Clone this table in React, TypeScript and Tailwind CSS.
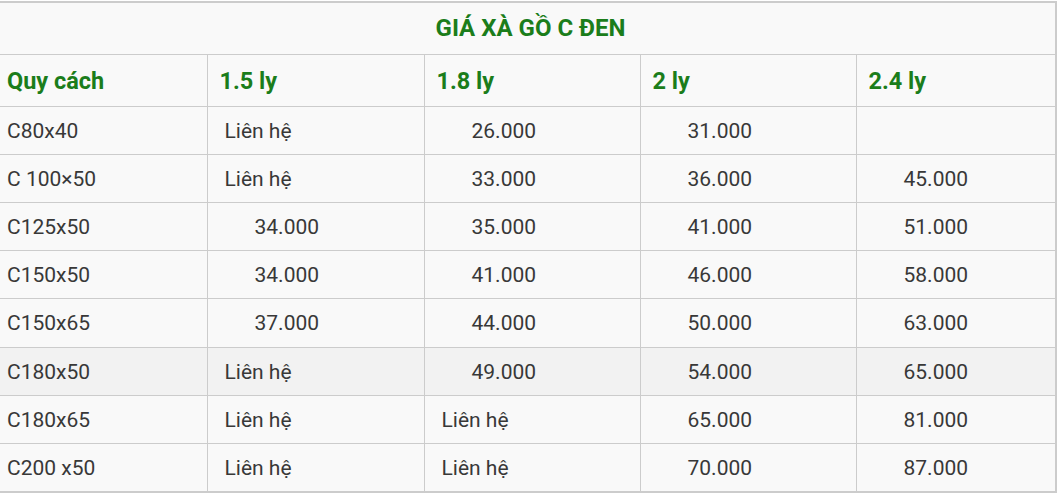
import React from "react";

type Cell = { t: string; pad: string } | null;

const L = (t: string): Cell => ({ t, pad: "pl-[17px]" });
const N = (t: string): Cell => ({ t, pad: "pl-[47px]" });

const rows: { name: string; cells: Cell[]; hl?: boolean; h: string }[] = [
  { name: "C80x40", cells: [L("Liên hệ"), N("26.000"), N("31.000"), null], h: "h-[48px]" },
  { name: "C 100×50", cells: [L("Liên hệ"), N("33.000"), N("36.000"), N("45.000")], h: "h-[48px]" },
  { name: "C125x50", cells: [N("34.000"), N("35.000"), N("41.000"), N("51.000")], h: "h-[48px]" },
  { name: "C150x50", cells: [N("34.000"), N("41.000"), N("46.000"), N("58.000")], h: "h-[48px]" },
  { name: "C150x65", cells: [N("37.000"), N("44.000"), N("50.000"), N("63.000")], h: "h-[49px]" },
  { name: "C180x50", cells: [L("Liên hệ"), N("49.000"), N("54.000"), N("65.000")], hl: true, h: "h-[48px]" },
  { name: "C180x65", cells: [L("Liên hệ"), L("Liên hệ"), N("65.000"), N("81.000")], h: "h-[48px]" },
  { name: "C200 x50", cells: [L("Liên hệ"), L("Liên hệ"), N("70.000"), N("87.000")], h: "h-[48px]" },
];

const headers = ["1.5 ly", "1.8 ly", "2 ly", "2.4 ly"];

export default function App() {
  return (
    <div className="w-[1058px] h-[493px] bg-white pt-px" style={{ fontFamily: "Roboto, 'Liberation Sans', sans-serif" }}>
      <div className="w-[1057px] bg-[#f9f9f9] border-t-2 border-r-2 border-b-2 border-[#cccccc]">
        <table className="w-[1055px] table-fixed border-collapse">
          <colgroup>
            <col className="w-[207px]" />
            <col className="w-[217px]" />
            <col className="w-[216px]" />
            <col className="w-[216px]" />
            <col className="w-[199px]" />
          </colgroup>
          <tbody>
            <tr className="h-[51px]">
              <td colSpan={5} className="text-center align-middle text-[24px] font-bold text-[#1b7d1b] pl-[6px] border-b border-[#cccccc]">
                GIÁ XÀ GỒ C ĐEN
              </td>
            </tr>
            <tr className="h-[52px]">
              <td className="pl-[7px] pt-[3px] text-[23.5px] font-bold text-[#1b7d1b] border-b border-[#cccccc]">Quy cách</td>
              {headers.map((h, i) => (
                <td key={i} className="pl-[12px] pt-[3px] text-[23.5px] font-bold text-[#1b7d1b] border-b border-l border-[#cccccc]">
                  {h}
                </td>
              ))}
            </tr>
            {rows.map((r, ri) => (
              <tr key={ri} className={`${r.h} ${r.hl ? "bg-[#f2f2f2]" : ""}`}>
                <td className={`pl-[7px] pt-[3px] text-[21px] text-[#383838] ${ri < rows.length - 1 ? "border-b" : ""} border-[#cccccc]`}>{r.name}</td>
                {r.cells.map((c, ci) => (
                  <td
                    key={ci}
                    className={`${c ? c.pad : ""} pt-[3px] text-[21px] text-[#383838] border-l ${ri < rows.length - 1 ? "border-b" : ""} border-[#cccccc]`}
                  >
                    {c ? c.t : ""}
                  </td>
                ))}
              </tr>
            ))}
          </tbody>
        </table>
      </div>
    </div>
  );
}
